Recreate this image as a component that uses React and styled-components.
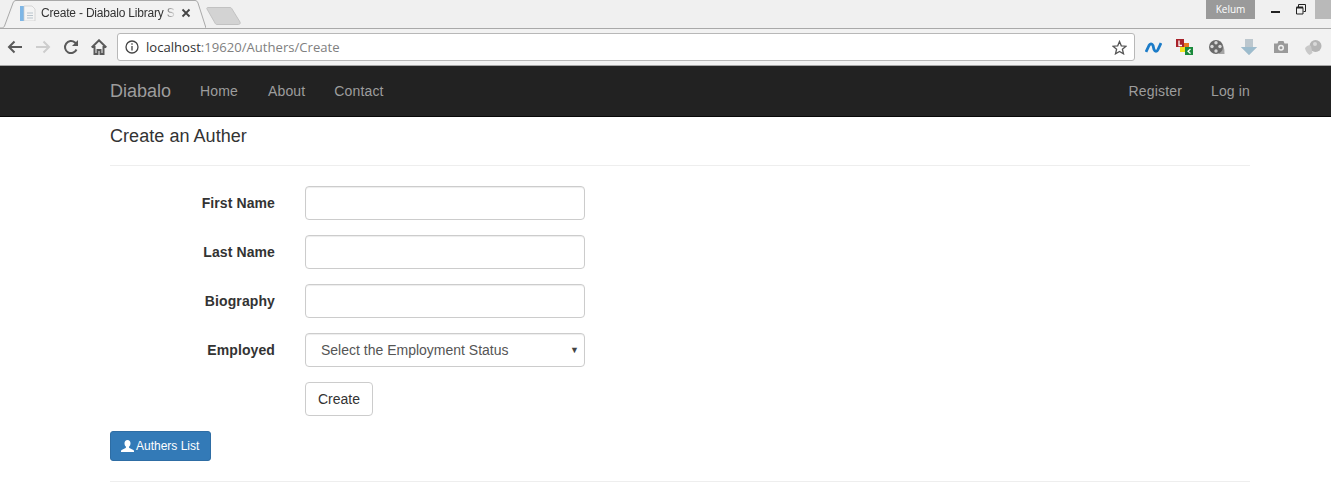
import React from "react";
import styled, { createGlobalStyle } from "styled-components";

const GlobalStyle = createGlobalStyle`
  html, body {
    margin: 0;
    height: 100%;
    background: #fff;
    overflow: hidden;
  }
  body {
    font-family: "Liberation Sans", Arial, sans-serif;
    font-size: 14px;
    color: #333;
  }
  * {
    box-sizing: border-box;
  }
`;

const TabStrip = styled.div`
  display: flex;
  align-items: flex-end;
  height: 29px;
  background: #f0f0f0;
  border-bottom: 1px solid #a9a9a9;
`;

const Tab = styled.div`
  position: relative;
  display: flex;
  align-items: center;
  width: 206px;
  height: 29px;
  margin-bottom: -1px;
  padding: 0 15px 3px 20px;
  gap: 5px;
  flex-shrink: 0;
`;

const TabShape = styled.svg`
  position: absolute;
  left: 0;
  top: 0;
`;

const TabTitle = styled.span`
  position: relative;
  flex: 1;
  font-size: 12px;
  letter-spacing: -0.2px;
  color: #333;
  white-space: nowrap;
  -webkit-mask-image: linear-gradient(to right, #000 90%, transparent);
  mask-image: linear-gradient(to right, #000 90%, transparent);
`;

const TabIcon = styled.svg`
  position: relative;
  flex-shrink: 0;
`;

const NewTab = styled.svg`
  margin: 0 0 3px 0;
  flex-shrink: 0;
`;

const WindowControls = styled.div`
  display: flex;
  align-self: flex-start;
  margin-left: auto;
  height: 19px;
`;

const UserBadge = styled.div`
  width: 49px;
  height: 19px;
  background: #9a9a9a;
  color: #fff;
  font-family: "Open Sans", sans-serif;
  font-size: 10px;
  line-height: 18px;
  text-align: center;
  margin-right: 16px;
`;

const WindowButton = styled.svg`
  display: block;
  margin-right: ${(p) => p.$gap}px;
  flex-shrink: 0;
`;

const CloseBlock = styled.div`
  width: 16px;
  height: 19px;
  background: #b9b9b9;
`;

const Toolbar = styled.div`
  display: flex;
  align-items: center;
  height: 37px;
  background: #f2f2f2;
  border-bottom: 1px solid #a6a6a6;
  padding: 0 0 0 7px;
`;

const NavIcons = styled.div`
  display: flex;
  align-items: center;
  gap: 12px;
  margin-right: 10px;
`;

const AddressBar = styled.div`
  display: flex;
  align-items: center;
  width: 1018px;
  height: 28px;
  background: #fff;
  border: 1px solid #b8b8b8;
  border-radius: 3px;
  padding: 0 7px 0 7px;
  font-size: 14px;
  flex-shrink: 0;
`;

const Host = styled.span`
  margin-left: 7px;
  color: #333;
  font-family: "Open Sans", sans-serif;
  font-size: 13.1px;
`;

const UrlPath = styled.span`
  color: #808080;
`;

const StarWrap = styled.span`
  display: flex;
  margin-left: auto;
`;

const Extensions = styled.div`
  display: grid;
  grid-template-columns: repeat(6, 32px);
  justify-items: center;
  align-items: center;
  margin-left: 2px;
`;

const Navbar = styled.nav`
  height: 51px;
  background: #222;
  border-bottom: 1px solid #080808;
  padding: 0 81px 0 110px;
  display: flex;
  align-items: center;
`;

const Brand = styled.a`
  color: #9d9d9d;
  font-size: 18px;
  margin-right: 29px;
`;

const NavLink = styled.a`
  color: #9d9d9d;
  font-size: 14px;
  letter-spacing: 0.15px;
  margin-right: ${(p) => p.$gap || 0}px;
`;

const NavRight = styled.div`
  display: flex;
  margin-left: auto;
`;

const Main = styled.main`
  padding: 0 81px 0 110px;
`;

const Title = styled.h4`
  margin: 0;
  padding-top: 9px;
  height: 49px;
  font-size: 18px;
  font-weight: 400;
  line-height: 20px;
  letter-spacing: 0.05px;
  color: #333;
  border-bottom: 1px solid #eee;
`;

const Form = styled.form`
  display: flex;
  flex-direction: column;
  gap: 15px;
  padding-top: 20px;
`;

const FormRow = styled.div`
  display: grid;
  grid-template-columns: 165px 280px;
  column-gap: 30px;
  align-items: center;
`;

const Label = styled.label`
  font-weight: 700;
  letter-spacing: 0.1px;
  text-align: right;
`;

const Input = styled.input`
  grid-column: 2;
  height: 34px;
  width: 100%;
  border: 1px solid #ccc;
  border-radius: 4px;
  background: #fff;
  box-shadow: inset 0 1px 1px rgba(0, 0, 0, 0.075);
`;

const SelectBox = styled.div`
  display: flex;
  align-items: center;
  justify-content: space-between;
  height: 34px;
  border: 1px solid #ccc;
  border-radius: 4px;
  padding: 0 5px 0 15px;
  color: #555;
  box-shadow: inset 0 1px 1px rgba(0, 0, 0, 0.075);
`;

const Caret = styled.span`
  font-size: 9px;
  color: #444;
`;

const DefaultButton = styled.button`
  grid-column: 2;
  justify-self: start;
  height: 34px;
  padding: 0 12px;
  background: #fff;
  border: 1px solid #ccc;
  border-radius: 4px;
  color: #333;
  font: inherit;
`;

const ListButton = styled.a`
  display: inline-flex;
  align-items: center;
  gap: 2px;
  height: 30px;
  margin-top: 15px;
  padding: 0 10px 0 10px;
  width: 101px;
  background: #337ab7;
  border: 1px solid #2e6da4;
  border-radius: 3px;
  color: #fff;
  font-size: 12px;
`;

const Footer = styled.hr`
  margin: 20px 0 0;
  border: 0;
  border-top: 1px solid #eee;
`;

function Chevron({ color, flip }) {
  return (
    <svg width="16" height="16" viewBox="0 0 16 16" fill="none" stroke={color} strokeWidth="2">
      <path d={flip ? "M1 8h13M8.500 2.500 14 8l-5.500 5.500" : "M15 8H2M7.500 2.500 2 8l5.500 5.500"} />
    </svg>
  );
}

function Page() {
  return (
    <>
      <Navbar>
        <Brand>Diabalo</Brand>
        <NavLink $gap={30}>Home</NavLink>
        <NavLink $gap={29}>About</NavLink>
        <NavLink>Contact</NavLink>
        <NavRight>
          <NavLink $gap={29}>Register</NavLink>
          <NavLink>Log in</NavLink>
        </NavRight>
      </Navbar>
      <Main>
        <Title>Create an Auther</Title>
        <Form>
          <FormRow>
            <Label>First Name</Label>
            <Input />
          </FormRow>
          <FormRow>
            <Label>Last Name</Label>
            <Input />
          </FormRow>
          <FormRow>
            <Label>Biography</Label>
            <Input />
          </FormRow>
          <FormRow>
            <Label>Employed</Label>
            <SelectBox>
              Select the Employment Status
              <Caret>▼</Caret>
            </SelectBox>
          </FormRow>
          <FormRow>
            <DefaultButton type="button">Create</DefaultButton>
          </FormRow>
        </Form>
        <ListButton>
          <svg width="13" height="12" viewBox="0 0 13 12" fill="#fff">
            <path d="M6.500 0C8.400 0 9.500 1.400 9.500 3.300c0 1.300-.5 2.600-1.300 3.300-.3.300-.3 1 .2 1.300L12.400 10c.4.200.6.600.6 1v1H0v-1c0-.4.200-.8.600-1l4-2.100c.5-.3.500-1 .2-1.300C4 5.900 3.500 4.600 3.500 3.300 3.500 1.400 4.600 0 6.500 0z" />
          </svg>
          Authers List
        </ListButton>
        <Footer />
      </Main>
    </>
  );
}

function BrowserChrome() {
  return (
    <>
      <TabStrip>
        <Tab>
          <TabShape width="206" height="29" viewBox="0 0 206 29">
            <path d="M0 28h4c1 0 1.500-.5 2-2L15 3c.5-1.500 1.500-2 3-2h176c1.500 0 2.500.5 3 2l9 25z" fill="#f2f2f2" />
            <path d="M0 28h2c1 0 1.500-.5 2.500-2L13 3c.5-1.500 1.500-2.500 3-2.500h179c1.500 0 2.500 1 3 2.500l8 25" fill="none" stroke="#a9a9a9" />
          </TabShape>
          <TabIcon width="16" height="16" viewBox="0 0 16 16">
            <rect x="0" y="1" width="4" height="15" fill="#7db6e6" />
            <path d="M4 1h8l3 3v12H4z" fill="#f4f4f4" stroke="#c9c9c9" strokeWidth="0.7" />
            <path d="M7 8h6M7 10.500h6M7 13h6" stroke="#b9c4cc" />
          </TabIcon>
          <TabTitle>Create - Diabalo Library S</TabTitle>
          <TabIcon width="10" height="10" viewBox="0 0 10 10">
            <path d="M1.500 1.500l7 7M8.500 1.500l-7 7" stroke="#444" strokeWidth="1.800" />
          </TabIcon>
        </Tab>
        <NewTab width="35" height="18" viewBox="0 0 35 18">
          <path d="M2 .5h22c1 0 1.500.5 2 1.500l8 13c.5 1 0 2.500-1.500 2.500H11c-1 0-1.500-.5-2-1.500L1 2c-.5-1 0-1.500 1-1.500z" fill="#d3d3d3" stroke="#c2c2c2" />
        </NewTab>
        <WindowControls>
          <UserBadge>Kelum</UserBadge>
          <WindowButton width="9" height="19" viewBox="0 0 9 19" $gap={16}>
            <rect x="0" y="11" width="9" height="2" fill="#222" />
          </WindowButton>
          <WindowButton width="10" height="19" viewBox="0 0 10 19" $gap={9}>
            <path d="M.5 7.500h6.500v6.500H.5zM2.500 7V4.500H9.500V11.500H7.500" fill="none" stroke="#222" />
            <path d="M.5 7.500h6.500" stroke="#222" strokeWidth="2" />
          </WindowButton>
          <CloseBlock />
        </WindowControls>
      </TabStrip>
      <Toolbar>
        <NavIcons>
          <Chevron color="#5a5a5a" />
          <Chevron color="#cdcdcd" flip />
          <svg width="16" height="16" viewBox="0 0 16 16" fill="none" stroke="#5a5a5a" strokeWidth="2">
            <path d="M13.500 10.500A6 6 0 1 1 12 3.600L14.500 6" />
            <path d="M15 1v6H9" fill="#5a5a5a" stroke="none" />
          </svg>
          <svg width="16" height="16" viewBox="0 0 16 16" fill="none" stroke="#5a5a5a" strokeWidth="2">
            <path d="M.7 8.500 8 1.300l7.300 7.200M3.500 7v8h3v-4h3v4h3V7" />
          </svg>
        </NavIcons>
        <AddressBar>
          <svg width="14" height="14" viewBox="0 0 14 14" fill="none" stroke="#444" strokeWidth="1.300">
            <circle cx="7" cy="7" r="6" />
            <path d="M7 6v4.500M7 3.200v1.600" />
          </svg>
          <Host>
            localhost<UrlPath>:19620/Authers/Create</UrlPath>
          </Host>
          <StarWrap>
            <svg width="15" height="15" viewBox="0 0 15 15" fill="none" stroke="#555" strokeWidth="1.300">
              <path d="M7.500 1.500 9.300 5.800l4.700.4-3.600 3 1.100 4.600-4-2.400-4 2.400 1.100-4.600-3.600-3 4.700-.4z" />
            </svg>
          </StarWrap>
        </AddressBar>
        <Extensions>
          <svg width="17" height="11" viewBox="0 0 17 11" fill="none" stroke="#1c7cc8" strokeWidth="2.800">
            <path d="M1 10 4 3.500C5 1.500 7 1 8 3.500l1 4C10 10 12 10 13 7.500L16 1" />
          </svg>
          <svg width="18" height="18" viewBox="0 0 18 18">
            <rect x="0" y="1" width="8" height="8" fill="#a8222a" />
            <rect x="8" y="5" width="5" height="4" fill="#e8781c" />
            <rect x="4" y="9" width="5" height="5" fill="#f1e21c" />
            <rect x="9" y="9" width="8" height="8" fill="#1a8a3c" />
            <path d="M3 2.500v5h3" stroke="#fff" fill="none" strokeWidth="1.300" />
            <path d="M14.500 11l-2.500 2.200 2.500 2.300" stroke="#fff" fill="none" strokeWidth="1.300" />
          </svg>
          <svg width="16" height="16" viewBox="0 0 16 16">
            <path d="M11 2q5 5 4.500 13H10z" fill="#a5a5a5" />
            <circle cx="7" cy="8" r="7" fill="#6a6a6a" />
            <circle cx="7" cy="3.800" r="1.700" fill="#d8d8d8" />
            <circle cx="3" cy="7.500" r="1.700" fill="#d8d8d8" />
            <circle cx="11" cy="7.500" r="1.700" fill="#d8d8d8" />
            <circle cx="7" cy="12" r="1.700" fill="#d8d8d8" />
          </svg>
          <svg width="16" height="16" viewBox="0 0 16 16">
            <path d="M4 0h8v8h4l-8 8-8-8h4z" fill="#bcc7ce" />
            <path d="M0 8h16l-8 8z" fill="#9dbccd" />
          </svg>
          <svg width="14" height="12" viewBox="0 0 14 12">
            <path d="M0 2.500h3.500l1-2.500h5l1 2.500H14V12H0z" fill="#9a9a9a" />
            <circle cx="7" cy="6.800" r="3" fill="#f2f2f2" />
            <circle cx="7" cy="6.800" r="1.500" fill="#9a9a9a" />
          </svg>
          <svg width="17" height="15" viewBox="0 0 17 15">
            <circle cx="10.500" cy="6" r="6" fill="#b5b5b5" />
            <path d="M0 8q3-4 6-2l1.500 7-3 2q-4-3-4.500-7z" fill="#c9c9c9" />
            <circle cx="10" cy="4" r="2" fill="#d9d9d9" />
          </svg>
        </Extensions>
      </Toolbar>
    </>
  );
}

export default function App() {
  return (
    <>
      <GlobalStyle />
      <BrowserChrome />
      <Page />
    </>
  );
}
